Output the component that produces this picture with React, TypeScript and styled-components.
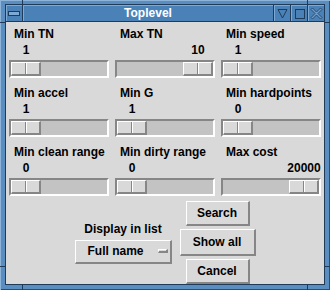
import React from 'react';
import styled, {createGlobalStyle} from 'styled-components';

const GlobalStyle = createGlobalStyle`
  html, body {
    margin: 0;
    padding: 0;
    background: #d9d9d9;
  }
  body {
    font-family: "Liberation Sans", Arial, sans-serif;
  }
`;

const Window = styled.div`
  position: relative;
  width: 330px;
  height: 290px;
  box-sizing: border-box;
  padding: 4px 5px 5px 5px;
  background: #5a8dc0;
  box-shadow: inset 1px 1px 0 #8fb4da, inset -1px -1px 0 #2c4d6e;
`;

const Inner = styled.div`
  height: 100%;
  box-sizing: border-box;
  border: 1px solid #1f3b57;
  display: flex;
  flex-direction: column;
`;

const TitleBar = styled.div`
  display: flex;
  height: 17px;
  box-sizing: border-box;
  border-bottom: 1px solid #1f3b57;
  background: #4a82b8;
`;

const TitleButton = styled.div<{$side: 'left' | 'right'}>`
  width: 17px;
  height: 16px;
  box-sizing: border-box;
  display: flex;
  align-items: center;
  justify-content: center;
  ${(p) => (p.$side === 'left' ? 'border-right: 1px solid #1f3b57;' : 'border-left: 1px solid #1f3b57;')}
  box-shadow: inset 1px 1px 0 #7ea9d4;
`;

const Title = styled.div`
  flex: 1;
  text-align: center;
  color: #ffffff;
  font-weight: bold;
  font-size: 12px;
  line-height: 16px;
  box-shadow: inset 1px 1px 0 #7ea9d4;
`;

const Handle = styled.div<{$x?: number; $y?: number; $edge: 'top' | 'bottom' | 'left' | 'right'}>`
  position: absolute;
  background: #1f3b57;
  ${(p) =>
    p.$edge === 'top' || p.$edge === 'bottom'
      ? `width: 1px; height: 5px; left: ${p.$x}px; ${p.$edge}: 0;`
      : `height: 1px; width: 5px; top: ${p.$y}px; ${p.$edge}: 0;`}
`;

const Content = styled.div`
  flex: 1;
  background: #d9d9d9;
  display: flex;
  flex-direction: column;
`;

const Grid = styled.div`
  display: grid;
  grid-template-columns: repeat(3, 106px);
  row-gap: 8px;
  padding-top: 5px;
`;

const Cell = styled.div`
  display: flex;
  flex-direction: column;
`;

const Label = styled.div<{$indent?: boolean}>`
  padding-left: ${(p) => (p.$indent ? 8 : 0)}px;
  height: 14px;
  font-size: 12px;
  line-height: 14px;
  font-weight: bold;
  color: #000;
  white-space: nowrap;
`;

const ValueRow = styled.div<{$at: 'min' | 'max'}>`
  display: flex;
  justify-content: ${(p) => (p.$at === 'min' ? 'flex-start' : 'flex-end')};
  margin-top: 2px;
  padding: 0 5px;
  height: 14px;
`;

const Value = styled.span`
  width: 30px;
  font-size: 12px;
  line-height: 14px;
  font-weight: bold;
  white-space: nowrap;
  display: flex;
  justify-content: center;
`;

const Trough = styled.div<{$at: 'min' | 'max'}>`
  margin: 3px 3px 0 3px;
  width: 100px;
  height: 18px;
  box-sizing: border-box;
  display: flex;
  justify-content: ${(p) => (p.$at === 'min' ? 'flex-start' : 'flex-end')};
  background: #c3c3c3;
  border-style: solid;
  border-width: 2px;
  border-color: #868686 #ffffff #ffffff #868686;
`;

const Thumb = styled.div`
  position: relative;
  width: 30px;
  height: 100%;
  box-sizing: border-box;
  background: #d9d9d9;
  border-style: solid;
  border-width: 1px 2px 2px 1px;
  border-color: #ffffff #868686 #868686 #ffffff;
  &::after {
    content: '';
    position: absolute;
    top: 0;
    bottom: 0;
    left: 13px;
    width: 0;
    border-left: 1px solid #868686;
    border-right: 1px solid #ffffff;
  }
`;

const Bottom = styled.div`
  display: flex;
  justify-content: center;
  align-items: center;
  gap: 8px;
  margin-top: 5px;
`;

const ListGroup = styled.div`
  display: flex;
  flex-direction: column;
  align-items: center;
  gap: 4px;
`;

const Menubutton = styled.div`
  width: 97px;
  height: 24px;
  box-sizing: border-box;
  display: flex;
  align-items: center;
  justify-content: space-between;
  padding: 0 1px 0 12px;
  background: #d9d9d9;
  border-style: solid;
  border-width: 1px 2px 2px 1px;
  border-color: #ffffff #868686 #868686 #ffffff;
  font-size: 12px;
  font-weight: bold;
`;

const Indicator = styled.div`
  width: 10px;
  height: 4px;
  margin-right: 1px;
  box-sizing: border-box;
  border-style: solid;
  border-width: 1px 2px 2px 1px;
  border-color: #ffffff #868686 #868686 #ffffff;
`;

const Buttons = styled.div`
  display: flex;
  flex-direction: column;
  align-items: center;
  gap: 3px;
`;

const Button = styled.div<{$default?: boolean}>`
  width: ${(p) => (p.$default ? 76 : 64)}px;
  height: ${(p) => (p.$default ? 27 : 25)}px;
  box-sizing: border-box;
  display: flex;
  align-items: center;
  justify-content: center;
  background: #d9d9d9;
  border-style: solid;
  border-width: 1px 2px 2px 1px;
  border-color: #ffffff #868686 #868686 #ffffff;
  font-size: 12px;
  font-weight: bold;
`;

const filters: {label: string; value: string; at: 'min' | 'max'}[] = [
  {label: 'Min TN', value: '1', at: 'min'},
  {label: 'Max TN', value: '10', at: 'max'},
  {label: 'Min speed', value: '1', at: 'min'},
  {label: 'Min accel', value: '1', at: 'min'},
  {label: 'Min G', value: '1', at: 'min'},
  {label: 'Min hardpoints', value: '0', at: 'min'},
  {label: 'Min clean range', value: '0', at: 'min'},
  {label: 'Min dirty range', value: '0', at: 'min'},
  {label: 'Max cost', value: '20000', at: 'max'},
];

function Scale({label, value, at}: {label: string; value: string; at: 'min' | 'max'}) {
  return (
    <Cell>
      <Label $indent>{label}</Label>
      <ValueRow $at={at}>
        <Value>{value}</Value>
      </ValueRow>
      <Trough $at={at}>
        <Thumb />
      </Trough>
    </Cell>
  );
}

export default function App() {
  return (
    <>
      <GlobalStyle />
      <Window>
        <Handle $edge="top" $x={22} />
        <Handle $edge="top" $x={307} />
        <Handle $edge="bottom" $x={22} />
        <Handle $edge="bottom" $x={307} />
        <Handle $edge="left" $y={22} />
        <Handle $edge="right" $y={22} />
        <Handle $edge="left" $y={266} />
        <Handle $edge="right" $y={266} />
        <Inner>
          <TitleBar>
            <TitleButton $side="left">
              <svg width="12" height="5" viewBox="0 0 12 5">
                <rect x="0.5" y="0.5" width="11" height="4" fill="#7ea9d4" stroke="#1f3b57" />
              </svg>
            </TitleButton>
            <Title>Toplevel</Title>
            <TitleButton $side="right">
              <svg width="11" height="11" viewBox="0 0 11 11">
                <path d="M1 1.5 L10 1.5 L5.5 10 Z" fill="none" stroke="#1f3b57" strokeWidth="1" />
              </svg>
            </TitleButton>
            <TitleButton $side="right">
              <svg width="11" height="11" viewBox="0 0 11 11">
                <rect x="1.5" y="1.5" width="9" height="9" fill="none" stroke="#1f3b57" />
              </svg>
            </TitleButton>
            <TitleButton $side="right">
              <svg width="13" height="13" viewBox="0 0 13 13">
                <path
                  d="M1 2.5 L2.5 1 L6.5 5 L10.5 1 L12 2.5 L8 6.5 L12 10.5 L10.5 12 L6.5 8 L2.5 12 L1 10.5 L5 6.5 Z"
                  fill="#6b9bcb"
                  stroke="#2a4d70"
                  strokeWidth="1"
                />
              </svg>
            </TitleButton>
          </TitleBar>
          <Content>
            <Grid>
              {filters.map((f) => (
                <Scale key={f.label} label={f.label} value={f.value} at={f.at} />
              ))}
            </Grid>
            <Bottom>
              <ListGroup>
                <Label>Display in list</Label>
                <Menubutton>
                  Full name
                  <Indicator />
                </Menubutton>
              </ListGroup>
              <Buttons>
                <Button>Search</Button>
                <Button $default>Show all</Button>
                <Button>Cancel</Button>
              </Buttons>
            </Bottom>
          </Content>
        </Inner>
      </Window>
    </>
  );
}
